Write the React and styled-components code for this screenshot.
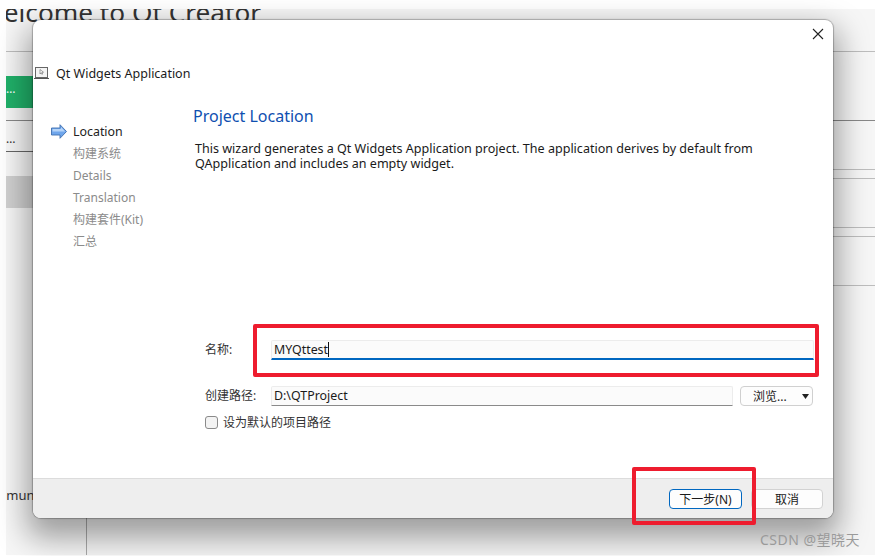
import React from "react";
import styled, { createGlobalStyle } from "styled-components";

const Global = createGlobalStyle`
  html, body { margin: 0; padding: 0; background: #fff; width: 875px; height: 556px; overflow: hidden; }
  * { box-sizing: border-box; }
  body { font-family: "Noto Sans", "Noto Sans CJK SC", sans-serif; font-size: 13px; color: #1b1b1b; }
`;

const Page = styled.div`
  position: relative;
  width: 875px;
  height: 556px;
  padding: 9px 0 1px 6px;
`;

/* The Qt Creator window behind the dialog */
const Backdrop = styled.div`
  position: relative;
  height: 546px;
  background: #f6f6f6;
  overflow: hidden;
`;
const WelcomeTitle = styled.div`
  font-size: 26.2px;
  line-height: 6px;
  color: #333;
  white-space: nowrap;
  margin-left: -26px;
`;
const BackLine = styled.div`
  position: absolute;
  left: ${p => p.$x ?? 0}px;
  right: ${p => p.$r ?? 0}px;
  top: ${p => p.$y}px;
  height: 1px;
  background: ${p => p.$c ?? "#bdbdbd"};
`;
const BackBlock = styled.div`
  position: absolute;
  left: 0;
  width: 30px;
  top: ${p => p.$y}px;
  height: 32px;
  background: ${p => p.$c};
  color: ${p => p.$t ?? "#333"};
  font-size: 12px;
  line-height: 26px;
`;
const BackDots = styled.div`
  position: absolute;
  left: 0;
  top: ${p => p.$y}px;
  font-size: 12px;
  line-height: 12px;
  color: #333;
`;
const Community = styled.div`
  position: absolute;
  left: -28px;
  top: 477px;
  font-size: 13px;
  line-height: 18px;
  color: #333;
  white-space: nowrap;
`;
const VLine = styled.div`
  position: absolute;
  left: 80px;
  top: 480px;
  bottom: 0;
  width: 1px;
  background: #a9a9a9;
`;

/* The dialog window */
const Dialog = styled.div`
  position: absolute;
  left: 33px;
  top: 20px;
  width: 800px;
  height: 498px;
  background: #fff;
  border-radius: 8px;
  box-shadow: 0 0 1px 1px rgba(0,0,0,0.25), 0 14px 30px 6px rgba(0,0,0,0.36);
  display: flex;
  flex-direction: column;
  overflow: hidden;
`;
const TitleBar = styled.div`
  height: 26px;
  display: flex;
  justify-content: flex-end;
  align-items: center;
  padding: 2px 9px 0 0;
  flex: none;
`;
const Header = styled.div`
  display: flex;
  align-items: center;
  gap: 7px;
  height: 18px;
  margin-top: 18px;
  padding-left: 1px;
  flex: none;
  font-size: 12.5px;
`;
const Body = styled.div`
  flex: 1;
  display: flex;
  min-height: 0;
`;
const Sidebar = styled.div`
  width: 160px;
  flex: none;
  padding: 38px 0 0 18px;
`;
const Step = styled.div`
  display: flex;
  align-items: center;
  height: 22px;
  gap: 6px;
  color: ${p => (p.$active ? "#222" : "#8b8b8b")};
  padding-left: ${p => (p.$active ? 0 : 22)}px;
  font-size: ${p => (p.$active ? 12.4 : 12)}px;
`;
const Content = styled.div`
  flex: 1;
  display: flex;
  flex-direction: column;
  padding: 23px 19px 0 0;
`;
const Heading = styled.div`
  font-size: 16px;
  line-height: 22px;
  color: #0f4fb0;
`;
const Description = styled.div`
  margin: 14px 0 0 2px;
  font-size: 12.55px;
  line-height: 15px;
  color: #1a1a1a;
`;
const Form = styled.div`
  margin: 169px 0 0 12px;
  display: grid;
  grid-template-columns: 66px 1fr;
  row-gap: 26px;
  align-items: center;
`;
const Label = styled.div`
  font-size: 12px;
  color: #333;
  line-height: 20px;
`;
const FieldRow = styled.div`
  display: flex;
  gap: 7px;
  align-items: center;
`;
const Input = styled.div`
  flex: 1;
  height: 20px;
  padding: 0 2px;
  background: #fbfbfb;
  border: 1px solid #ececec;
  border-bottom: ${p => (p.$focus ? "2px solid #0067c0" : "1px solid #8a8a8a")};
  font-size: 12.4px;
  line-height: 18px;
  color: #1a1a1a;
  border-radius: 2px 2px 0 0;
  white-space: nowrap;
`;
const Caret = styled.span`
  display: inline-block;
  width: 1px;
  height: 15px;
  vertical-align: -3px;
  background: #111;
`;
const Browse = styled.div`
  width: 73px;
  height: 20px;
  flex: none;
  border: 1px solid #d0d0d0;
  border-radius: 4px;
  background: #fdfdfd;
  display: flex;
  align-items: center;
  justify-content: space-between;
  padding: 0 3px 0 12px;
  font-size: 12px;
  margin-right: 1px;
`;
const CheckRow = styled.div`
  display: flex;
  align-items: center;
  gap: 5px;
  height: 16px;
  margin-top: 8px;
  margin-left: 12px;
  font-size: 12px;
  color: #333;
`;
const Check = styled.span`
  width: 13px;
  height: 13px;
  border: 1px solid #8a8a8a;
  border-radius: 3px;
  background: #f3f3f3;
`;
const Footer = styled.div`
  height: 40px;
  flex: none;
  background: #eeeeee;
  border-top: 1px solid #dcdcdc;
  display: flex;
  justify-content: flex-end;
  align-items: center;
  gap: 9px;
  padding: 0 10px 0 0;
`;
const Button = styled.div`
  width: ${p => (p.$primary ? 73 : 72)}px;
  height: 20px;
  display: flex;
  align-items: center;
  justify-content: center;
  font-size: 12px;
  background: #fdfdfd;
  color: #1a1a1a;
  border: 1px solid ${p => (p.$primary ? "#0067c0" : "#d2d2d2")};
  border-radius: 4px;
`;

/* Red annotations drawn over the screenshot */
const RedBox = styled.div`
  position: absolute;
  left: ${p => p.$x}px;
  top: ${p => p.$y}px;
  width: ${p => p.$w}px;
  height: ${p => p.$h}px;
  border: 4px solid #ee1c2e;
  border-radius: 2px;
`;
const Watermark = styled.div`
  position: absolute;
  right: 15px;
  top: 531px;
  font-size: 14px;
  line-height: 18px;
  color: #9a9a9a;
  letter-spacing: 0.5px;
`;

const AppIcon = () => (
  <svg width="15" height="13" viewBox="0 0 15 13" fill="none">
    <rect x="1.5" y="0.5" width="12" height="10" fill="#f4f4f4" stroke="#666" />
    <path d="M0 11.5h15" stroke="#555" />
    <path d="M6 2.5l3.5 2.7-1.6.2.8 1.6-.8.4-.8-1.6L6 7z" fill="#fff" stroke="#666" strokeWidth=".6" />
  </svg>
);
const Arrow = () => (
  <svg width="16" height="15" viewBox="0 0 16 15">
    <path d="M0.5 4h8.5V0.7L15.5 7.5 9 14.3V11H0.5z" fill="#6fa6ec" stroke="#3f6fb0" strokeWidth="0.9" />
    <path d="M1.5 5h8.5V3l4 4.5H1.5z" fill="#b5d4f8" />
  </svg>
);
const Close = () => (
  <svg width="12" height="12" viewBox="0 0 12 12">
    <path d="M1 1l10 10M11 1L1 11" stroke="#222" strokeWidth="1.1" />
  </svg>
);
const Caretdown = () => (
  <svg width="7" height="5" viewBox="0 0 7 5"><path d="M0 0h7L3.5 5z" fill="#222" /></svg>
);

export default function App() {
  return (
    <Page>
      <Global />
      <Backdrop>
        <WelcomeTitle>Welcome to Qt Creator</WelcomeTitle>
        <BackLine $y={42} />
        <BackBlock $y={67} $c="#20b069" $t="#fff">…</BackBlock>
        <BackLine $y={111} $c="#888" />
        <BackDots $y={124}>…</BackDots>
        <BackLine $y={142} $c="#666" $r={800} />
        <BackBlock $y={167} $c="#d0d0d0" />
        <BackLine $x={800} $y={160} />
        <BackLine $x={800} $y={169} />
        <BackLine $x={800} $y={218} />
        <BackLine $x={800} $y={227} />
        <BackLine $x={800} $y={276} />
        <Community>Community</Community>
        <VLine />
      </Backdrop>
      <Dialog>
        <TitleBar><Close /></TitleBar>
        <Header>
          <AppIcon />
          <span>Qt Widgets Application</span>
        </Header>
        <Body>
          <Sidebar>
            <Step $active><Arrow />Location</Step>
            <Step>构建系统</Step>
            <Step>Details</Step>
            <Step>Translation</Step>
            <Step>构建套件(Kit)</Step>
            <Step>汇总</Step>
          </Sidebar>
          <Content>
            <Heading>Project Location</Heading>
            <Description>
              This wizard generates a Qt Widgets Application project. The application derives by default from
              <br />
              QApplication and includes an empty widget.
            </Description>
            <Form>
              <Label>名称:</Label>
              <FieldRow><Input $focus>MYQttest<Caret /></Input></FieldRow>
              <Label>创建路径:</Label>
              <FieldRow>
                <Input>D:\QTProject</Input>
                <Browse>浏览...<Caretdown /></Browse>
              </FieldRow>
            </Form>
            <CheckRow><Check />设为默认的项目路径</CheckRow>
          </Content>
        </Body>
        <Footer>
          <Button $primary>下一步(N)</Button>
          <Button>取消</Button>
        </Footer>
      </Dialog>
      <RedBox $x={253} $y={324} $w={566} $h={53} />
      <RedBox $x={632} $y={467} $w={124} $h={58} />
      <Watermark>CSDN @望晓天</Watermark>
    </Page>
  );
}
